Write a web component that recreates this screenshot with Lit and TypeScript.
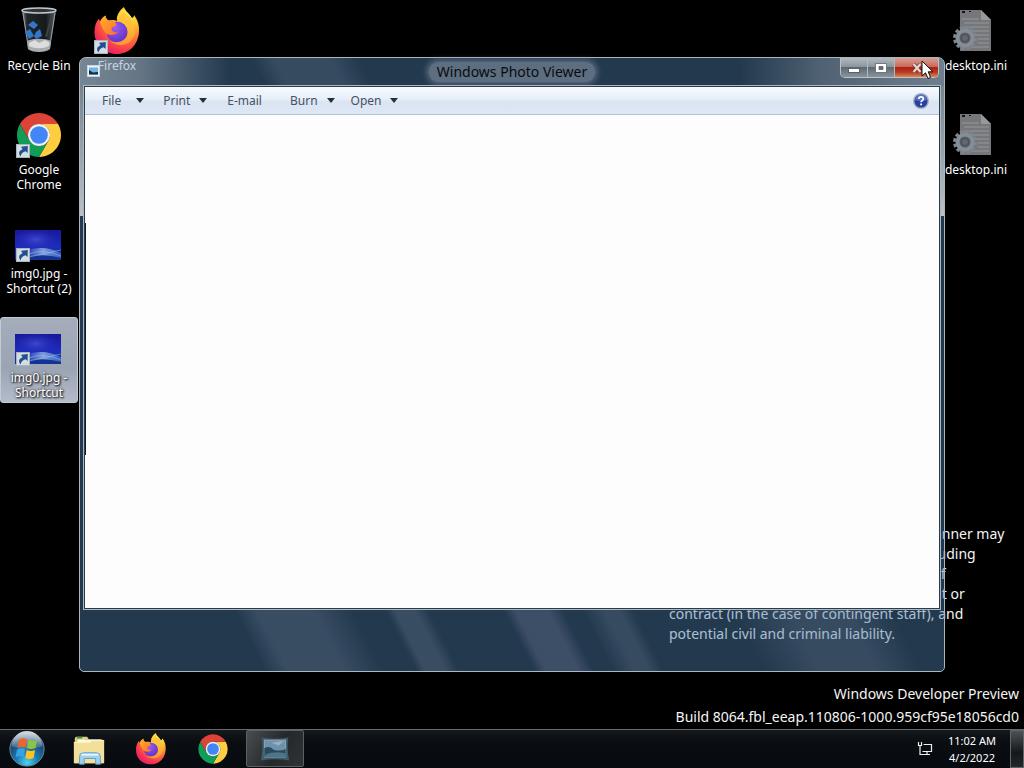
import { LitElement, html, css, svg } from "lit";
import { customElement } from "lit/decorators.js";

const arrowBadge = svg`
  <rect x="0" y="0" width="14" height="14" fill="#d5dde4"/>
  <rect x=".5" y=".5" width="13" height="13" fill="none" stroke="#a9b4be"/>
  <path d="M4.500 12.500 C1.800 8.800 3.400 6.400 6.600 5.200 L5 2.800 L11.800 2 L11.600 9 L9.600 7.200 C6.800 8 5.200 9.400 4.500 12.500Z" fill="#20508f"/>`;

const firefoxArt = svg`
  <defs>
    <radialGradient id="ff" cx=".75" cy=".15" r="1">
      <stop offset="0" stop-color="#fff050"/><stop offset=".3" stop-color="#ffbd2c"/>
      <stop offset=".55" stop-color="#ff7139"/><stop offset=".8" stop-color="#f53450"/>
      <stop offset="1" stop-color="#e0148a"/>
    </radialGradient>
    <radialGradient id="fp" cx=".4" cy=".3" r=".8">
      <stop offset="0" stop-color="#9a5cf0"/><stop offset="1" stop-color="#5a2fc0"/>
    </radialGradient>
    <linearGradient id="ft" x1="0" y1="0" x2="1" y2="1">
      <stop offset="0" stop-color="#ffb52a"/><stop offset="1" stop-color="#ff6a2a"/>
    </linearGradient>
  </defs>
  <path d="M31 0 C32 4 37 7 39 11 C41 10 41 9 41 8 C45 13 46.5 19 46 25 C45 38 36 47 24 47 C11 47 1.500 38 1.500 25 C1.500 19 3 15 6 11.500 L7 15 C8 12 10 10 12.500 8.500 C12.500 11 14 12.500 15.500 13.500 C18 12.500 22 13 24 14 C23 8 27 3 31 0Z" fill="url(#ff)"/>
  <circle cx="24" cy="25" r="10.500" fill="url(#fp)"/>
  <path d="M7 15 C8 12 10 10 12.500 8.500 C12.500 11 14 12.500 15.500 13.500 C19 13 23 15 23.500 17.500 C23 20 19 19.500 18.500 21.500 C18.500 24 21 26 25 25 C23 28 18 29 14 27 C10 24 8 18 7 15Z" fill="url(#ft)"/>
  <path d="M25 13 C32 14 36 20 35 27 C33 34 24 37 17 34 C27 42 41 37 42 25 C42.500 17 38 10 31 5 C29 8 26 10 25 13Z" fill="#ffb93a" opacity=".65"/>`;

const chromeArt = svg`
  <path d="M24 13 H43.050 A22 22 0 0 1 24 46 L33.500 29.500 A11 11 0 0 0 24 13Z" fill="#ffcd40"/>
  <path d="M4.950 13 L14.500 29.500 A11 11 0 0 0 33.500 29.500 L24 46 A22 22 0 0 1 4.950 13Z" fill="#0f9d58"/>
  <path d="M4.950 13 A22 22 0 0 1 43.050 13 H24 A11 11 0 0 0 14.500 29.500Z" fill="#db4437"/>
  <circle cx="24" cy="24" r="11" fill="#f1f1f1"/><circle cx="24" cy="24" r="8.800" fill="#4285f4"/>`;

const recycleArt = svg`
  <defs>
    <linearGradient id="bin" x1="0" x2="1"><stop offset="0" stop-color="#7a8288"/><stop offset=".15" stop-color="#20272c"/><stop offset=".7" stop-color="#15191c"/><stop offset="1" stop-color="#5c6469"/></linearGradient>
  </defs>
  <path d="M7 3 H41 L35 42 C31 46 17 46 13 42Z" fill="url(#bin)"/>
  <path d="M12 34 C18 31 30 31 36 34 L35 42 C31 46 17 46 13 42Z" fill="#a9adaf"/>
  <path d="M14 36 L20 33 24 36 30 33 35 36 34 39 C28 42 20 42 14 39Z" fill="#dcdede"/>
  <ellipse cx="24" cy="3.500" rx="17" ry="2.500" fill="#303437" stroke="#c3c8cb" stroke-width="1.500"/>
  <path d="M8 6 L13.500 41 M40 6 L34.500 41" stroke="#9ba2a6" stroke-width="1" fill="none"/>
  <path d="M13 18 L18 14 23 18 19 22Z M10 25 L15 22 19 29 14 32Z M21 25 L25 22 27 29 21 32 19 29Z" fill="#3476c8"/>
  <path d="M37 8 L31 30" stroke="#3c4347" stroke-width="2"/>`;

const photoArt = svg`
  <defs>
    <linearGradient id="sky" x1="0" y1="0" x2="0" y2="1"><stop offset="0" stop-color="#18189c"/><stop offset=".55" stop-color="#1c2cbc"/><stop offset="1" stop-color="#12348c"/></linearGradient>
    <radialGradient id="glow" cx=".45" cy=".4" r=".5"><stop offset="0" stop-color="#4850d4" stop-opacity=".8"/><stop offset="1" stop-color="#2228b0" stop-opacity="0"/></radialGradient>
    <linearGradient id="wave" x1="0" x2="1"><stop offset="0" stop-color="#7ea4e4" stop-opacity="0"/><stop offset=".5" stop-color="#8fb4e8"/><stop offset="1" stop-color="#5c86d8" stop-opacity=".6"/></linearGradient>
  </defs>
  <rect x="0" y="15" width="46" height="30" fill="url(#sky)"/>
  <rect x="0" y="15" width="46" height="24" fill="url(#glow)"/>
  <path d="M10 36 Q28 29 46 38 V43 Q30 38 12 42Z" fill="url(#wave)" opacity=".85"/>
  <path d="M14 39 Q28 33 46 41 M14 42 Q32 38 46 35" stroke="#a6c6f0" stroke-width="1" fill="none" opacity=".5"/>`;

const iniArt = svg`
  <path d="M8 3 H29 L39 13 V44 H8Z" fill="#75777a"/>
  <path d="M29 3 V13 H39Z" fill="#98999b"/>
  <path d="M10 12 H27 M12 16 H37 M12 20 H37 M17 24 H37 M24 28 H37 M26 32 H37 M26 36 H37 M19 40 H37" stroke="#96989a" stroke-width="1"/>
  <path d="M10 4 H13 V6 H10Z M17 4 H19 V5 H17Z" fill="#141414"/>
  <circle cx="13" cy="31" r="10.500" fill="none" stroke="#7d858d" stroke-width="3" stroke-dasharray="3.500 2"/>
  <circle cx="13" cy="31" r="7.500" fill="#555b61" stroke="#858e96" stroke-width="4"/>
  <circle cx="13" cy="31" r="3.500" fill="#62686e" stroke="#4a5056"/>`;

const explorerArt = svg`
  <path d="M4 8 Q4 6 6 6 H17 L19 9 H32 Q34 9 34 11 V34 H4Z" fill="#e6cf7a"/>
  <path d="M6 6 H12 V8 H6Z" fill="#3a9a4a"/><path d="M20 9 H27 V11 H20Z" fill="#3b82c8"/><path d="M15 9 H19 V10 H15Z" fill="#c8402c"/>
  <path d="M7 9 H32 V13 H7Z" fill="#fbf8e6"/>
  <path d="M3 12 H20 L22 10 H35 V34 H3Z" fill="#f2e09a"/>
  <path d="M3 12 H20 L22 10 H35" stroke="#fff6c4" fill="none"/>
  <path d="M9 35 V27 Q9 23 13 23 H27 Q31 23 31 27 V35 H26 V29 H14 V35Z" fill="#9fd0ee" stroke="#5b9fce"/>
  <path d="M11 25 H29" stroke="#e4f5fd" stroke-width="2"/>`;

const startArt = svg`
  <defs>
    <radialGradient id="orb" cx=".5" cy=".9" r=".9"><stop offset="0" stop-color="#4fd2f4"/><stop offset=".35" stop-color="#1d7cb4"/><stop offset=".7" stop-color="#1a4a74"/><stop offset="1" stop-color="#6b8498"/></radialGradient>
    <linearGradient id="gl" x1="0" y1="0" x2="0" y2="1"><stop offset="0" stop-color="#fff" stop-opacity=".75"/><stop offset="1" stop-color="#fff" stop-opacity=".12"/></linearGradient>
  </defs>
  <circle cx="20" cy="20" r="18" fill="url(#orb)" stroke="#6f8b9e"/>
  <path d="M4 17 A16 16 0 0 1 36 17 Q20 23 4 17Z" fill="url(#gl)"/>
  <path d="M12 10 Q16 7.500 20 10 L18.500 18.500 Q14.500 16.500 10 18.500Z" fill="#f0632a"/>
  <path d="M21.500 10.500 Q26 12.500 30.500 10.500 L29 19 Q24.500 21 20 19Z" fill="#8cc63e"/>
  <path d="M9.500 20.500 Q14 18 18 20.500 L16.500 28.500 Q12.500 26.500 8 28.500Z" fill="#36a2e4"/>
  <path d="M19.700 21 Q24 23 28.500 21 L27 29.500 Q22.500 31.500 18.200 29.500Z" fill="#ffc421"/>`;

const viewerArt = svg`
  <path d="M3 3 Q18 6 33 3 Q31 16 34 29 Q18 26 2 29 Q5 16 3 3Z" fill="#3f5a6c"/>
  <rect x="6" y="6" width="24" height="19" fill="#6f92ac" stroke="#93a9b6"/>
  <path d="M6 15 Q12 12 17 17 Q24 19 30 16 V25 H6Z" fill="#284a5c"/>
  <path d="M8 22 Q18 18 30 21 V25 H6Z" fill="#4d7488"/>
  <path d="M14 9 L28 7 22 12Z" fill="#a9c0ce" opacity=".7"/>`;

@customElement("desktop-icon")
export class DesktopIcon extends LitElement {
  static properties = { art: {}, lines: {}, shortcut: { type: Boolean }, selected: { type: Boolean, reflect: true } };
  declare art: unknown;
  declare lines: string[];
  declare shortcut: boolean;
  declare selected: boolean;
  static styles = css`
    :host { display: flex; height: 104px; box-sizing: border-box; padding-top: 5px; }
    .item {
      width: 78px; height: 86px; padding: 1px 0 0; border: 1px solid transparent; border-radius: 3px;
      box-sizing: border-box; background: none; color: #fff; text-align: center;
      font: 12px/15px "Noto Sans", "Open Sans", sans-serif; text-shadow: 0 1px 2px #000;
      display: flex; flex-direction: column; align-items: center; white-space: nowrap;
    }
    :host([selected]) .item { background: linear-gradient(#a5adbb, #9ba4b3 60%, #b4bcca); border-color: #c4cad4; text-shadow: 1px 1px 2px #000, 0 0 3px #222; }
    .pic { width: 48px; height: 48px; flex: none; margin-bottom: 3px; }
    .label { display: block; }
  `;
  render() {
    return html`<button class="item">
      <svg class="pic" viewBox="0 0 48 48">${this.art}${this.shortcut ? svg`<g transform="translate(1 33)">${arrowBadge}</g>` : ""}</svg>
      ${this.lines.map((l) => html`<span class="label">${l}</span>`)}
    </button>`;
  }
}

@customElement("photo-viewer")
export class PhotoViewer extends LitElement {
  static styles = css`
    :host {
      display: flex; flex-direction: column; box-sizing: border-box;
      border: 1px solid #aab6c0; border-radius: 7px 7px 5px 5px; padding: 0 4px 62px;
      font-family: "Noto Sans", "Open Sans", sans-serif;
      background:
        linear-gradient(#8c979fcc, #c6cacdee) left 0 top 28px / 5px 130px no-repeat,
        linear-gradient(#8c979fcc, #c6cacdee) right 0 top 28px / 5px 130px no-repeat,
        linear-gradient(90deg, #ebf0f56b 0, #ebf0f554 60px, #ebf0f500 150px, #ebf0f500 660px, #ebf0f538 740px, #ebf0f560 860px) left top / 100% 28px no-repeat,
        linear-gradient(63deg, transparent 165px, #8e9eb42e 185px 235px, transparent 260px) left top / 100% 28px no-repeat,
        linear-gradient(63deg, transparent 165px, #8e9eb433 185px 235px, transparent 270px 300px, #8e9eb433 308px 326px, transparent 338px 405px, #8e90b43d 415px 445px, transparent 458px 475px, #8e9eb42e 495px 508px, transparent 520px 610px, #8e9eb42e 660px 710px, transparent 750px) left bottom / 100% 62px no-repeat,
        rgba(78, 126, 172, .45);
    }
    .title { display: grid; grid-template-columns: 1fr auto 1fr; height: 28px; flex: none; align-items: start; }
    .app { width: 13px; height: 12px; margin: 7px 0 0 3px; }
    h1 {
      margin: 4px 0 0; padding: 0 8px; font-size: 14px; line-height: 20px; font-weight: 400; color: #080c10; white-space: nowrap;
      border-radius: 9px; background: #8290a09c; box-shadow: 0 0 6px 2px #8290a09c;
    }
    .controls { display: flex; justify-self: end; margin-right: 1px; height: 19px; border: 1px solid #b9c3ca; border-top: 0; border-radius: 0 0 5px 5px; overflow: hidden; }
    .ctl { padding: 0; border: 0; border-right: 1px solid #b0bac2; width: 27px; background: linear-gradient(#b3b9bf, #8b939b 48%, #5f6973 50%, #8a949c); display: grid; place-items: center; }
    .close { width: 43px; border: 0; background: linear-gradient(#d9a094, #c8695a 46%, #ae2311 50%, #b83b20 75%, #dc8458); }
    .glyph { width: 14px; height: 12px; display: block; }
    .client {
      flex: 1; display: flex; flex-direction: column; border: 1px solid #2c3b4a; box-shadow: 0 0 0 1px #a9b8c4;
      background: linear-gradient(#101c30, #101c30) left 0 top 136px / 1px 232px no-repeat, #fdfdfd;
    }
    .menu { display: flex; align-items: center; height: 27px; flex: none; padding: 0 9px 0 6px; border-bottom: 1px solid #b4c2d6; background: linear-gradient(#f8fbfe, #e6eef9 45%, #dae4f2 55%, #dde7f5); }
    .entry { display: flex; align-items: center; border: 0; background: none; padding: 0 17px 0 12px; font: 12px/16px "Noto Sans", "Open Sans", sans-serif; color: #465262; }
    .drop { gap: 15px; padding: 0 8px 0 11px; }
    .near { gap: 9px; }
    .last { padding-left: 8px; }
    .tri { width: 8px; height: 5px; fill: #26303c; }
    .help { margin-left: auto; padding: 0; border: 0; background: none; width: 18px; height: 18px; }
    .q { display: block; width: 18px; height: 18px; }
  `;
  render() {
    const tri = html`<svg class="tri" viewBox="0 0 8 5"><path d="M0 0H8L4 5Z"/></svg>`;
    return html`
      <header class="title">
        <svg class="app" viewBox="0 0 13 12"><rect x=".5" y=".5" width="12" height="11" fill="#e8f3fa" stroke="#c4d6e2"/><rect x="2" y="2.500" width="9" height="7" fill="#6fb4e0"/><path d="M2 5 L6 7.500 11 7 V9.500 H2Z" fill="#142c3c"/></svg>
        <h1>Windows Photo Viewer</h1>
        <div class="controls">
          <button class="ctl" aria-label="Minimize"><svg class="glyph" viewBox="0 0 14 12"><rect x="1.500" y="6.500" width="11" height="4" fill="#fff" stroke="#5a636c"/></svg></button>
          <button class="ctl" aria-label="Maximize"><svg class="glyph" viewBox="0 0 14 12"><path d="M1.500 1.500H12.500V10.500H1.500Z M5 4.500V7.500H9V4.500Z" fill="#fff" fill-rule="evenodd" stroke="#5a636c" stroke-width=".8"/></svg></button>
          <button class="ctl close" aria-label="Close"><svg class="glyph" viewBox="0 0 14 12"><path d="M3.500 2 L10.500 10 M10.500 2 L3.500 10" stroke="#6c3a34" stroke-width="3.600"/><path d="M3.500 2 L10.500 10 M10.500 2 L3.500 10" stroke="#e9d6cf" stroke-width="2.200"/></svg></button>
        </div>
      </header>
      <section class="client">
        <nav class="menu">
          <button class="entry drop">File ${tri}</button>
          <button class="entry drop near">Print ${tri}</button>
          <button class="entry">E-mail</button>
          <button class="entry drop near">Burn ${tri}</button>
          <button class="entry drop near last">Open ${tri}</button>
          <button class="help" aria-label="Help"><svg class="q" viewBox="0 0 18 18"><circle cx="9" cy="9" r="8" fill="#a8b0c4"/><circle cx="9" cy="9" r="6.600" fill="#2840a0"/><path d="M3 8 A6 6 0 0 1 15 8 Q9 10 3 8Z" fill="#6c84cc" opacity=".7"/><path d="M6.800 7 Q6.800 4.800 9 4.800 Q11.300 4.800 11.300 6.800 Q11.300 8 10 8.700 Q9.100 9.200 9.100 10.300" fill="none" stroke="#fff" stroke-width="1.700"/><rect x="8.200" y="11.500" width="1.800" height="1.800" fill="#fff"/></svg></button>
        </nav>
      </section>`;
  }
}

@customElement("task-bar")
export class TaskBar extends LitElement {
  static styles = css`
    :host { display: flex; height: 39px; flex: none; box-sizing: border-box; border-top: 1px solid #626a6e; background: linear-gradient(#15191c, #0a0e12 30%, #070b10); color: #fff; font: 12px/17px "Noto Sans", "Open Sans", sans-serif; }
    button { padding: 0; border: 1px solid transparent; background: none; color: inherit; font: inherit; display: grid; place-items: center; }
    svg { display: block; }
    .start { width: 54px; margin-right: 6px; }
    .orb { width: 38px; height: 38px; margin: -2px 0; }
    .tasks { display: flex; gap: 4px; padding-bottom: 1px; }
    .task { width: 58px; }
    .active { background: linear-gradient(120deg, #4a4d50, #25282b 55%, #303336); border-color: #5c6064; border-radius: 2px; }
    .big { width: 36px; height: 36px; }
    .mid { width: 32px; height: 32px; }
    .tray { display: flex; margin-left: auto; align-items: center; }
    .net { width: 16px; height: 16px; }
    .clock { width: 76px; font-size: 11px; align-content: center; }
    .peek { width: 14px; align-self: stretch; border-color: #5e6468; background: linear-gradient(#4c5256, #14181b 60%, #22272a); }
  `;
  render() {
    return html`
      <button class="start" aria-label="Start"><svg class="orb" viewBox="0 0 40 40">${startArt}</svg></button>
      <nav class="tasks">
        <button class="task" aria-label="Explorer"><svg class="big" viewBox="0 0 38 38">${explorerArt}</svg></button>
        <button class="task" aria-label="Firefox"><svg class="mid" viewBox="0 0 48 48">${firefoxArt}</svg></button>
        <button class="task" aria-label="Chrome"><svg class="mid" viewBox="0 0 48 48">${chromeArt}</svg></button>
        <button class="task active" aria-label="Photo Viewer"><svg class="mid" viewBox="0 0 36 32">${viewerArt}</svg></button>
      </nav>
      <div class="tray">
        <button aria-label="Network"><svg class="net" viewBox="0 0 16 16"><path d="M6.500 3.500H14.500V10.500H5.500 M10 10.500V13.500 M6 13.500H13 M1.500 1V4.500H4.500V1 M3 4.500V13.500H6" fill="none" stroke="#eee" stroke-width="1.200"/></svg></button>
        <button class="clock"><span>11:02 AM</span><span>4/2/2022</span></button>
        <button class="peek" aria-label="Show desktop"></button>
      </div>`;
  }
}

@customElement("app-root")
export class AppRoot extends LitElement {
  static styles = css`
    :host { display: flex; flex-direction: column; height: 100vh; overflow: hidden; background: #000; font-family: "Noto Sans", "Open Sans", sans-serif; }
    .desk { position: relative; flex: 1; display: flex; justify-content: space-between; align-items: flex-start; min-height: 0; }
    .icons { display: grid; grid-auto-flow: column; grid-template-rows: repeat(4, 104px); }
    .right { padding-right: 9px; }
    .notice { position: absolute; left: 669px; bottom: 85px; margin: 0; color: #f4f4f4; font-size: 14px; line-height: 20px; white-space: nowrap; }
    .build { position: absolute; right: 5px; bottom: 1px; margin: 0; color: #f4f4f4; font-size: 14px; line-height: 23px; text-align: right; }
    .window { position: absolute; inset: 57px 79px 57px 79px; }
    .cursor { position: absolute; left: 921px; top: 60px; width: 14px; height: 20px; }
  `;
  render() {
    return html`
      <main class="desk">
        <div class="icons">
          <desktop-icon .art=${recycleArt} .lines=${["Recycle Bin"]}></desktop-icon>
          <desktop-icon .art=${chromeArt} .lines=${["Google", "Chrome"]} shortcut></desktop-icon>
          <desktop-icon .art=${photoArt} .lines=${["img0.jpg -", "Shortcut (2)"]} shortcut></desktop-icon>
          <desktop-icon .art=${photoArt} .lines=${["img0.jpg -", "Shortcut"]} shortcut selected></desktop-icon>
          <desktop-icon .art=${firefoxArt} .lines=${["Firefox"]} shortcut></desktop-icon>
        </div>
        <div class="icons right">
          <desktop-icon .art=${iniArt} .lines=${["desktop.ini"]}></desktop-icon>
          <desktop-icon .art=${iniArt} .lines=${["desktop.ini"]}></desktop-icon>
        </div>
        <p class="notice">Unauthorized use or disclosure in any manner may<br>result in disciplinary action up to and including<br>termination of employment (in the case of<br>employees), termination of an assignment or<br>contract (in the case of contingent staff), and<br>potential civil and criminal liability.</p>
        <p class="build">Windows Developer Preview<br>Build 8064.fbl_eeap.110806-1000.959cf95e18056cd0</p>
        <photo-viewer class="window"></photo-viewer>
        <svg class="cursor" viewBox="0 0 14 20"><path d="M1 1 V16 L4.500 12.800 L7 18.500 L9.600 17.400 L7.200 11.800 H12Z" fill="#fff" stroke="#111"/></svg>
      </main>
      <task-bar></task-bar>`;
  }
}
